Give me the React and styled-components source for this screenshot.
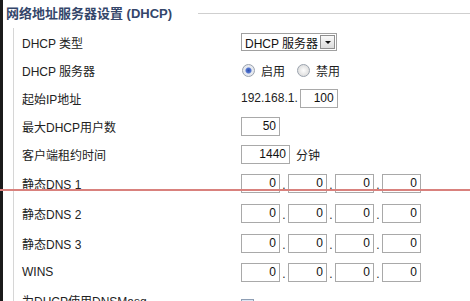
import React from 'react';
import styled, { createGlobalStyle } from 'styled-components';

const GlobalStyles = createGlobalStyle`
    html, body {
        margin: 0;
        padding: 0;
        background: #fff;
        font-family: "Liberation Sans", "Noto Sans CJK SC", sans-serif;
        font-size: 12px;
        color: #1e1e1e;
    }
`;

const Page = styled.div`
    position: relative;
    display: flex;
    width: 470px;
    height: 301px;
    overflow: hidden;
    background: #fff;
`;

const DarkEdge = styled.div`
    width: 3px;
    flex-shrink: 0;
    background: #1b1b1b;
`;

const Main = styled.div`
    flex: 1;
    padding-left: 3px;
`;

const Header = styled.div`
    display: flex;
    align-items: center;
    height: 28px;
    gap: 26px;
`;

const Title = styled.h2`
    margin: 0;
    font-size: 13px;
    font-weight: bold;
    color: #34466a;
    white-space: nowrap;
    line-height: 16px;
`;

const Rule = styled.div`
    flex: 1;
    height: 1px;
    background: #cfcfcf;
    margin-top: -2px;
`;

const Body = styled.div`
    margin-left: 7px;
    border-left: 1px solid #d6d6d6;
    padding-left: 8px;
`;

const Row = styled.div`
    display: grid;
    grid-template-columns: 219px auto;
    align-items: center;
    height: ${(p) => p.$h || 28}px;
`;

const Label = styled.span`
    white-space: nowrap;
    color: #222;
`;

const Controls = styled.div`
    display: flex;
    align-items: center;
    white-space: nowrap;
`;

const Box = styled.input`
    box-sizing: border-box;
    width: ${(p) => p.$w || 39}px;
    height: 19px;
    border: 1px solid #a9a9a9;
    padding: 0 3px 0 0;
    margin: 0;
    font-family: "Liberation Sans", sans-serif;
    font-size: 12px;
    text-align: right;
    color: #111;
    background: #fff;
    outline: none;
`;

const Dot = styled.span`
    width: 8px;
    text-align: center;
    padding-top: 4px;
`;

const Unit = styled.span`
    margin-left: ${(p) => p.$ml || 6}px;
`;

const Select = styled.div`
    box-sizing: border-box;
    display: flex;
    align-items: center;
    width: 96px;
    height: 18px;
    border: 1px solid #a0a0a0;
    padding: 1px;
`;

const SelectText = styled.span`
    flex: 1;
    padding-left: 2px;
    color: #111;
`;

const SelectButton = styled.span`
    box-sizing: border-box;
    width: 15px;
    height: 14px;
    border: 1px solid #8f8f8f;
    background: linear-gradient(#fafafa, #dcdcdc);
    display: flex;
    align-items: center;
    justify-content: center;
`;

const Arrow = styled.span`
    width: 0;
    height: 0;
    border-left: 3px solid transparent;
    border-right: 3px solid transparent;
    border-top: 3px solid #111;
`;

const RadioItem = styled.label`
    display: flex;
    align-items: center;
    gap: 6px;
    margin-right: 12px;
    margin-left: ${(p) => p.$ml || 0}px;
`;

const RadioCircle = styled.span`
    box-sizing: border-box;
    width: 13px;
    height: 13px;
    border-radius: 50%;
    border: 1px solid #9aa2ad;
    background: radial-gradient(circle, ${(p) => (p.$on ? '#2c4fb0 0, #5577d0 2.5px, #e6e9ef 3.5px' : '#fdfdfd 0, #e2e2e2 5px')});
    display: inline-block;
`;

const Check = styled.span`
    box-sizing: border-box;
    width: 13px;
    height: 13px;
    border: 1px solid #8e9eb4;
    background: #dbe6f4;
    display: flex;
    align-items: center;
    justify-content: center;
    margin-top: 10px;
`;

const RedLine = styled.div`
    position: absolute;
    left: 0;
    right: 0;
    top: 189px;
    height: 2px;
    background: #d9817d;
`;

const ip = ['0', '0', '0', '0'];

const IpFields = () => (
    <Controls>
        {ip.map((v, i) => (
            <React.Fragment key={i}>
                {i > 0 && <Dot>.</Dot>}
                <Box readOnly value={v} />
            </React.Fragment>
        ))}
    </Controls>
);

const App = () => {
    return (
        <>
            <GlobalStyles />
            <Page>
                <DarkEdge />
                <Main>
                    <Header>
                        <Title>网络地址服务器设置 (DHCP)</Title>
                        <Rule />
                    </Header>
                    <Body>
                        <Row>
                            <Label>DHCP 类型</Label>
                            <Select>
                                <SelectText>DHCP 服务器</SelectText>
                                <SelectButton><Arrow /></SelectButton>
                            </Select>
                        </Row>
                        <Row>
                            <Label>DHCP 服务器</Label>
                            <Controls>
                                <RadioItem $ml={1}><RadioCircle $on />启用</RadioItem>
                                <RadioItem><RadioCircle />禁用</RadioItem>
                            </Controls>
                        </Row>
                        <Row>
                            <Label>起始IP地址</Label>
                            <Controls>
                                <span>192.168.1.</span>
                                <Unit $ml={2} />
                                <Box readOnly value="100" $w={38} />
                            </Controls>
                        </Row>
                        <Row>
                            <Label>最大DHCP用户数</Label>
                            <Controls>
                                <Box readOnly value="50" />
                            </Controls>
                        </Row>
                        <Row>
                            <Label>客户端租约时间</Label>
                            <Controls>
                                <Box readOnly value="1440" $w={49} />
                                <Unit>分钟</Unit>
                            </Controls>
                        </Row>
                        <Row $h={30}>
                            <Label>静态DNS 1</Label>
                            <IpFields />
                        </Row>
                        <Row $h={30}>
                            <Label>静态DNS 2</Label>
                            <IpFields />
                        </Row>
                        <Row $h={30}>
                            <Label>静态DNS 3</Label>
                            <IpFields />
                        </Row>
                        <Row>
                            <Label>WINS</Label>
                            <IpFields />
                        </Row>
                        <Row>
                            <Label>为DHCP使用DNSMasq</Label>
                            <Controls>
                                <Check>
                                    <svg width="9" height="9" viewBox="0 0 9 9">
                                        <path d="M1 4.5 L3.5 7 L8 1.5" stroke="#2a3f73" strokeWidth="1.6" fill="none" />
                                    </svg>
                                </Check>
                            </Controls>
                        </Row>
                    </Body>
                </Main>
                <RedLine />
            </Page>
        </>
    );
};

export default App;
